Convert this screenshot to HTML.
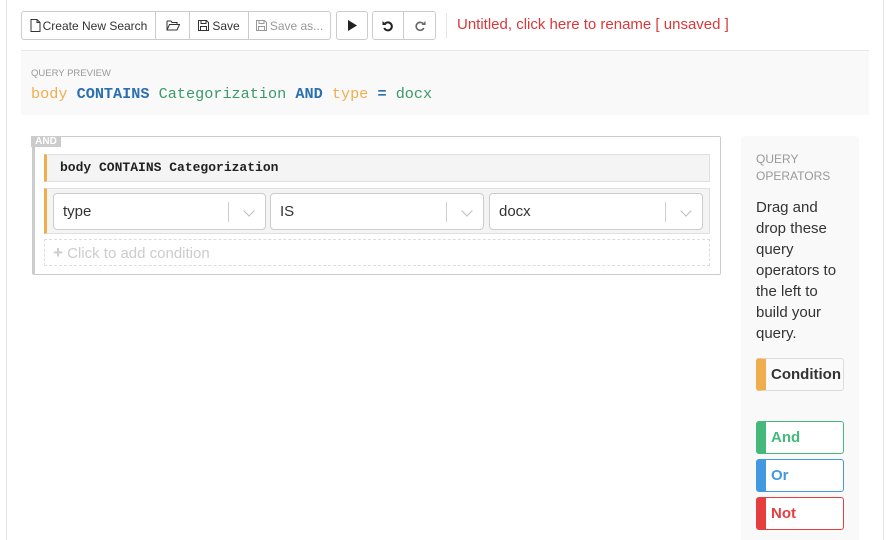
<!DOCTYPE html>
<html style="height:540px;overflow:hidden"><head><style>
*{box-sizing:border-box;margin:0;padding:0}
body{width:886px;height:540px;background:#fff;font-family:"Liberation Sans",sans-serif;position:relative;overflow:hidden;color:#333}
.frame{position:absolute;left:6px;top:-2px;width:878px;height:542px;border:1px solid #e3e3e3;border-bottom:none}
.abs{position:absolute}
.btn{position:absolute;top:11px;height:29px;border:1px solid #ccc;background:#fff;font-size:12px;display:flex;align-items:center;justify-content:center;color:#333}
.mono{font-family:"Liberation Mono","DejaVu Sans Mono",monospace}
.sel{position:absolute;top:4px;height:37px;border:1px solid #ccc;border-radius:4px;background:#fff;font-size:15px;padding-left:9px;line-height:35px}
.sel .sep{position:absolute;right:36px;top:8px;width:1px;height:20px;background:#ccc}
.sel .ch{position:absolute;right:12px;top:13px;width:8px;height:8px;border-right:1.5px solid #bbb;border-bottom:1.5px solid #bbb;transform:rotate(45deg)}
.op{position:absolute;left:756px;width:88px;height:33px;border:1px solid #ccc;border-left:10px solid;border-radius:3px;background:#fff;font-size:15px;font-weight:bold;padding-left:5px;line-height:31px}
</style></head><body>
<div class="frame"></div>
<div class="btn" style="left:21px;width:135px;border-radius:3px 0 0 3px">
<svg width="11" height="13" viewBox="0 0 11 13" style="margin-right:2px"><path d="M1 .5h6l3 3v9H1z M7 .5v3h3" fill="none" stroke="#333"/></svg>Create New Search</div>
<div class="btn" style="left:155px;width:35px"><svg width="14" height="11" viewBox="0 0 14 11"><path d="M1 1h4l1 1.5h5v2M1 1v9h10l2.5-5.5H3.5L1 10" fill="none" stroke="#333"/></svg></div>
<div class="btn" style="left:189px;width:60px"><svg width="11" height="11" viewBox="0 0 11 11" style="margin-right:3px"><path d="M.5.5h8l2 2v8H.5z M3 .5v3h5v-3 M2.5 10.5v-4h6v4" fill="none" stroke="#333"/></svg>Save</div>
<div class="btn" style="left:248px;width:83px;color:#999;border-radius:0 3px 3px 0"><svg width="11" height="11" viewBox="0 0 11 11" style="margin-right:3px"><path d="M.5.5h8l2 2v8H.5z M3 .5v3h5v-3 M2.5 10.5v-4h6v4" fill="none" stroke="#999"/></svg>Save as...</div>
<div class="btn" style="left:336px;width:32px;border-radius:3px"><svg width="10" height="11"><path d="M1 0l9 5.5L1 11z" fill="#222"/></svg></div>
<div class="btn" style="left:372px;width:32px;border-radius:3px 0 0 3px"><svg width="12" height="12" viewBox="0 0 12 12"><path d="M3 3.5A4 4 0 1 1 2.2 8" fill="none" stroke="#222" stroke-width="2"/><path d="M0.5 1v4h4z" fill="#222"/></svg></div>
<div class="btn" style="left:403px;width:33px;border-radius:0 3px 3px 0"><svg width="12" height="12" viewBox="0 0 12 12"><path d="M9 3.5A4 4 0 1 0 9.8 8" fill="none" stroke="#666" stroke-width="1.6"/><path d="M11.5 1v4h-4z" fill="#666"/></svg></div>
<div class="abs" style="left:446px;top:13px;width:1px;height:25px;background:#e5e5e5"></div>
<div class="abs" style="left:457px;top:16px;font-size:15px;color:#d9383a">Untitled, click here to rename [ unsaved ]</div>
<div class="abs" style="left:21px;top:50px;width:848px;height:65px;background:#f9f9f9;border-top:1px solid #e8e8e8"></div>
<div class="abs" style="left:31px;top:68px;font-size:9.5px;color:#999">QUERY PREVIEW</div>
<div class="abs mono" style="left:31px;top:85px;font-size:15.2px;white-space:pre"><span style="color:#f0ad4e">body</span> <b style="color:#2c6fb0">CONTAINS</b> <span style="color:#3a9a6a">Categorization</span> <b style="color:#2c6fb0">AND</b> <span style="color:#f0ad4e">type</span> <b style="color:#2c6fb0">=</b> <span style="color:#3a9a6a">docx</span></div>
<div class="abs" style="left:32px;top:136px;width:689px;height:139px;border:1px solid #ccc;border-left:3px solid #ccc;border-radius:2px"></div>
<div class="abs" style="left:31px;top:136px;width:30px;height:11px;background:#ccc;color:#fff;font-size:10px;font-weight:bold;text-align:center;line-height:11px">AND</div>
<div class="abs mono" style="left:44px;top:154px;width:666px;height:28px;background:#f4f4f4;border:1px solid #e0e0e0;border-left:3px solid #f0ad4e;font-size:13px;font-weight:bold;padding-left:13px;line-height:26px;color:#222">body CONTAINS Categorization</div>
<div class="abs" style="left:44px;top:188px;width:666px;height:46px;background:#f4f4f4;border:1px solid #e0e0e0;border-left:3px solid #f0ad4e">
<div class="sel" style="left:6px;width:213px">type<div class="sep"></div><div class="ch"></div></div>
<div class="sel" style="left:223px;width:214px">IS<div class="sep"></div><div class="ch"></div></div>
<div class="sel" style="left:442px;width:214px">docx<div class="sep"></div><div class="ch"></div></div>
</div>
<div class="abs" style="left:44px;top:239px;width:666px;height:27px;border:1px dashed #ddd;font-size:15px;color:#ccc;padding-left:8px;line-height:25px"><b style="font-size:17px">+</b> Click to add condition</div>
<div class="abs" style="left:741px;top:136px;width:118px;height:404px;background:#f9f9f9;border-radius:4px 4px 0 0"></div>
<div class="abs" style="left:756px;top:151px;font-size:12px;color:#999;line-height:17px">QUERY<br>OPERATORS</div>
<div class="abs" style="left:756px;top:197px;font-size:15px;line-height:21px;color:#333">Drag and<br>drop these<br>query<br>operators to<br>the left to<br>build your<br>query.</div>
<div class="op" style="top:358px;border-color:#ddd #ddd #ddd #f0ad4e;color:#333;background:#fafafa">Condition</div>
<div class="op" style="top:421px;border-color:#45b97c;color:#45b97c">And</div>
<div class="op" style="top:459px;border-color:#4299e1;color:#4299e1">Or</div>
<div class="op" style="top:497px;border-color:#e53e3e;color:#e53e3e">Not</div>
</body></html>
